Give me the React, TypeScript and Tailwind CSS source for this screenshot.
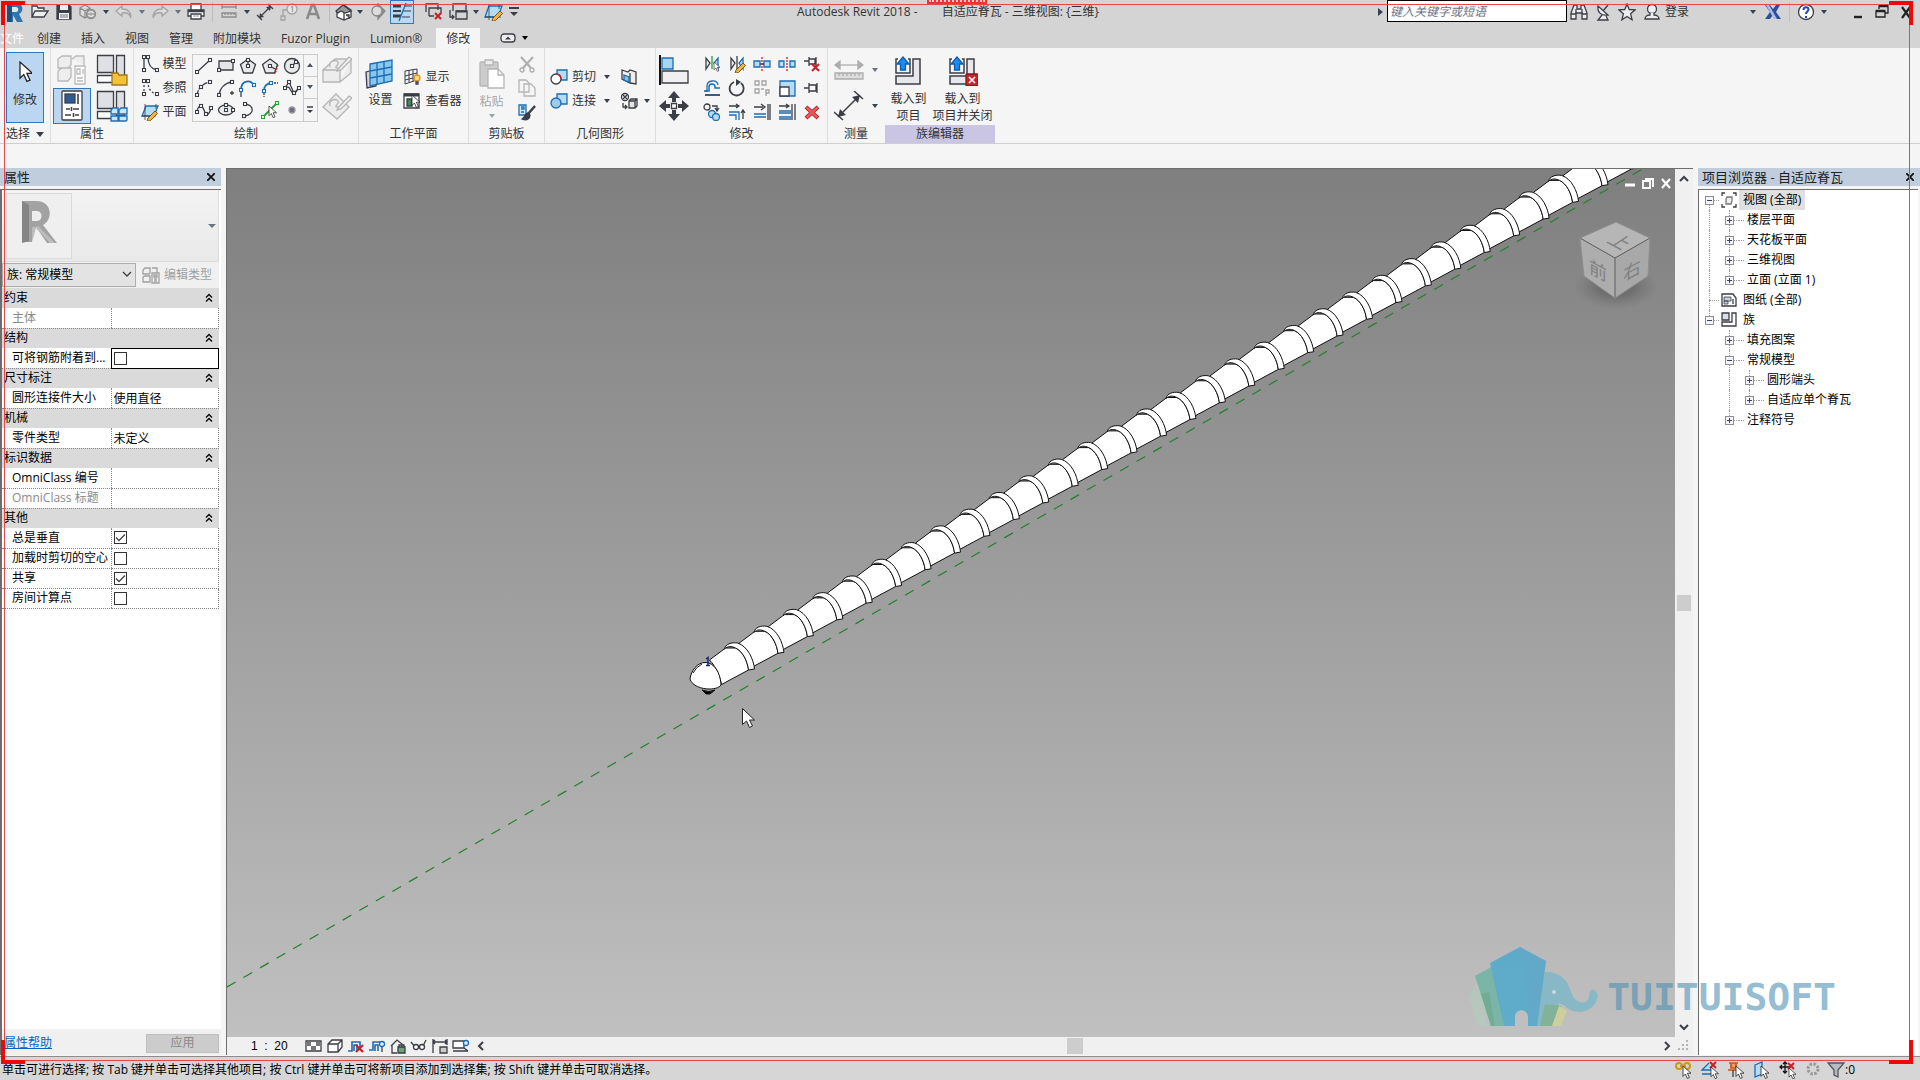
import React, { useState } from 'react';

const INK = '#3b3e46';
const BLUE = '#1c6db5';
const SKY = '#b5dcf3';
const GREY = '#a3a3a3';
const RED = '#c8202a';

type IconProps = { w?: number; h?: number; stroke?: string; children: React.ReactNode };

const Icon = ({ w = 18, h = 18, stroke = INK, children }: IconProps) => (
  <svg width={w} height={h} viewBox={`0 0 ${w} ${h}`} fill="none" stroke={stroke} strokeWidth={1.3} className="block shrink-0" aria-hidden="true">
    {children}
  </svg>
);

// Square handles drawn on the ends of sketch curves
const Nodes = ({ at, color = INK }: { at: [number, number][]; color?: string }) => (
  <>
    {at.map(([x, y]) => (
      <rect key={`${x}-${y}`} x={x - 1.5} y={y - 1.5} width={3} height={3} fill="#fff" stroke={color} strokeWidth={1.1} />
    ))}
  </>
);

const Pointer = ({ x = 0, y = 0, s = 1 }: { x?: number; y?: number; s?: number }) => (
  <path transform={`translate(${x} ${y}) scale(${s})`} d="M0 0v13l3-3 2.500 5.500 2.500-1-2.500-5.500h4.500z" fill="#fff" stroke="#222" strokeWidth={1} />
);

const Cross = ({ x, y, s = 5, w = 2 }: { x: number; y: number; s?: number; w?: number }) => (
  <path d={`M${x} ${y}l${s} ${s}M${x + s} ${y}l${-s} ${s}`} stroke={RED} strokeWidth={w} />
);

const Caret = ({ className = 'border-t-gray-700' }: { className?: string }) => (
  <span className={`inline-block border-x-[3px] border-t-4 border-x-transparent ${className}`} />
);

const Pencil = ({ x, y }: { x: number; y: number }) => (
  <path d={`M${x} ${y}l7-7 2.500 2.500-7 7-3.500 1z`} fill="#f0b440" stroke="#6b4a1a" strokeWidth={0.9} />
);

/* ---------- title bar ---------- */

const quick = {
  open: <Icon><path d="M1 14V3h5l1 2h6v2M1 14l3-6h13l-4 6z" fill="#eee" /></Icon>,
  save: <Icon><path d="M2 2h12l2 2v12H2z" fill={INK} /><path d="M5 2h8v5H5z" fill="#eee" stroke="none" /><path d="M4 10h10v6H4z" fill="#fff" stroke="none" /><path d="M5 12h8M5 14h8" strokeWidth={0.8} /></Icon>,
  sync: <Icon stroke="#8b8b8b"><path d="M1 5l5-3 5 3v7l-5 3-5-3zM1 5l5 3 5-3M6 8v7" fill="#ddd" /><circle cx="12" cy="11" r="4.500" fill="#aaa" /><path d="M9.500 10a3 3 0 0 1 5 0M14.500 12a3 3 0 0 1-5 0" stroke="#eee" /></Icon>,
  undo: <Icon stroke={GREY}><path d="M7 3L1 8l6 5v-3c5-1 8 1 9 5 0-6-3-9-9-9z" fill="#ddd" /></Icon>,
  redo: <Icon stroke={GREY}><path d="M11 3l6 5-6 5v-3c-5-1-8 1-9 5 0-6 3-9 9-9z" fill="#ddd" /></Icon>,
  print: <Icon><path d="M4 7V1h10v6" fill="#fff" /><path d="M1 7h16v6H1z" fill="#fff" /><path d="M1 8h16" strokeWidth={2.500} /><path d="M4 11h10v5H4z" fill="#fff" /><path d="M6 13h6" stroke="#aaa" /></Icon>,
  dims: <Icon stroke="#8d8d8d"><path d="M2 4h14M2 2v4M16 2v4M2 10h14v4H2zM5 10v2M8 10v2M11 10v2M14 10v2" /></Icon>,
  measure: <Icon><path d="M3 15L15 3M1 12l5 5M12 1l5 5" /><path d="M3 15l1-5 4 4zM15 3l-1 5-4-4z" fill={INK} stroke="none" /></Icon>,
  tag: <Icon stroke={GREY}><circle cx="12" cy="6" r="5" fill="#e5e5e5" /><path d="M7 7H3v7M1 13h4v4H1z" /><path d="M11 4.500l1.500-1V9" /></Icon>,
  text: <Icon stroke="#8a8a8a"><path d="M3 16L8 2h2l5 14M5 11h8" strokeWidth={2.600} /></Icon>,
  house: <Icon><path d="M2 8l7-6 7 5v7l-7 3-7-3z" fill="#fff" /><path d="M1 8l7-6 8 6-6 2-4-2-3 2z" fill="#999" /><path d="M9 10v7" /><path d="M11 12h3v4" fill="#888" /></Icon>,
  section: <Icon stroke="#888"><circle cx="8" cy="8" r="5" fill="#ddd" /><path d="M9 3a5 5 0 0 1 0 10zM9 1l7 7-7 8z" fill="#999" /><circle cx="8" cy="8" r="4" fill="#ddd" stroke="none" /></Icon>,
  thin: <Icon w={20}><path d="M1 3h8M1 13h8" strokeWidth={3} /><path d="M1 8h8" strokeWidth={2} /><path d="M12 3h8M11 8h8M10 14h8" strokeWidth={1} /><path d="M14 0L7 18" stroke={BLUE} /></Icon>,
  closeWin: <Icon><path d="M1 9V1h12v6M4 13V5h12v6M4 13h5" fill="none" /><Cross x={10} y={10} s={6} w={2.200} /></Icon>,
  switchWin: <Icon w={20}><path d="M5 8V1h13v7M8 16V8h11v8z" /><path d="M8 8.500h11" strokeWidth={2} /><path d="M2 7v7h3M4 12l2 2-2 2" /></Icon>,
  plane: <Icon w={20}><path d="M5 3h13l-4 11H1z" fill={SKY} stroke={BLUE} /><path d="M5 1v16M1 14h16M15 1v5" strokeWidth={0.8} /><Pencil x={9} y={15} /></Icon>,
  custom: <Icon w={12} h={12}><path d="M1 2h10" strokeWidth={2} /><path d="M2 6h8l-4 4z" fill={INK} stroke="none" /></Icon>,
};

const QuickButton = ({ name, children, className = 'w-6' }: { name: string; children: React.ReactNode; className?: string }) => (
  <button aria-label={name} className={`flex h-6 shrink-0 items-center justify-center ${className}`}>{children}</button>
);

const Divider = () => <span className="mx-1 h-5 w-px shrink-0 bg-[#bdbdbd]" />;

function TitleBar() {
  return (
    <header className="flex h-7 items-start bg-[#d4d4d4]">
      <div className="flex h-6 shrink-0 items-center">
        <QuickButton name="Revit" className="w-7">
          <Icon w={20} h={22} stroke="none">
            <path d="M3 2h9c8 0 8 9 3 11l4 8h-6l-4-7v7H3z" fill="#2f74ad" />
            <path d="M3 2l5 3v16H3z" fill="#1d4f80" />
            <path d="M8 6h4c3 0 3 5 0 5H8z" fill="#dce7ef" />
          </Icon>
        </QuickButton>
        <QuickButton name="打开">{quick.open}</QuickButton>
        <QuickButton name="保存">{quick.save}</QuickButton>
        <QuickButton name="同步">{quick.sync}</QuickButton>
        <QuickButton name="同步选项" className="w-3"><Caret /></QuickButton>
        <QuickButton name="放弃">{quick.undo}</QuickButton>
        <QuickButton name="放弃列表" className="w-3"><Caret className="border-t-gray-500" /></QuickButton>
        <QuickButton name="重做">{quick.redo}</QuickButton>
        <QuickButton name="重做列表" className="w-3"><Caret className="border-t-gray-500" /></QuickButton>
        <QuickButton name="打印" className="w-6">{quick.print}</QuickButton>
        <Divider />
        <QuickButton name="测量" className="w-6">{quick.dims}</QuickButton>
        <QuickButton name="测量选项" className="w-3"><Caret /></QuickButton>
        <QuickButton name="对齐尺寸标注">{quick.measure}</QuickButton>
        <QuickButton name="按类别标记">{quick.tag}</QuickButton>
        <QuickButton name="文字">{quick.text}</QuickButton>
        <Divider />
        <QuickButton name="默认三维视图" className="w-5">{quick.house}</QuickButton>
        <QuickButton name="三维选项" className="w-3"><Caret /></QuickButton>
        <QuickButton name="剖面">{quick.section}</QuickButton>
        <QuickButton name="细线" className="w-6 border border-[#2f78bd] bg-[#b9d8f2]">{quick.thin}</QuickButton>
        <QuickButton name="关闭隐藏窗口" className="ml-2 w-6">{quick.closeWin}</QuickButton>
        <QuickButton name="切换窗口">{quick.switchWin}</QuickButton>
        <QuickButton name="窗口列表" className="w-3"><Caret /></QuickButton>
        <QuickButton name="工作平面">{quick.plane}</QuickButton>
        <QuickButton name="自定义" className="w-4">{quick.custom}</QuickButton>
      </div>

      <div className="flex h-6 flex-1 items-center justify-center gap-6 whitespace-nowrap pr-1 text-[#333]">
        <span>Autodesk Revit 2018 -</span>
        <span>自适应脊瓦 - 三维视图: {'{三维}'}</span>
      </div>

      <div className="flex h-6 shrink-0 items-center pr-0.5">
        <span className="mr-1 border-y-4 border-l-[5px] border-y-transparent border-l-gray-700" />
        <input aria-label="搜索" placeholder="键入关键字或短语" className="h-[22px] w-[180px] self-start border border-black bg-white px-0.5 italic text-gray-800 placeholder:text-gray-500 outline-none" />
        <QuickButton name="搜索">
          <Icon><path d="M4 2h3v4h4V2h3l3 8v6h-5v-6H6v6H1v-6z" fill="#eee" /><path d="M1 11h5M12 11h5M6 6v4M12 6v4" /></Icon>
        </QuickButton>
        <QuickButton name="通讯中心">
          <Icon><path d="M4 3c-1 6 3 10 10 9zM9 8l5-6M8 12l-4 5h10l-2-4" fill="#eee" /></Icon>
        </QuickButton>
        <QuickButton name="收藏夹">
          <Icon><path d="M9 1l2.200 5.500 6 .3-4.600 4 1.500 6L9 13.500l-5.100 3.300 1.500-6-4.600-4 6-.3z" fill="#eee" /></Icon>
        </QuickButton>
        <button className="flex h-6 w-[98px] items-center gap-1 pl-1 text-[#333]">
          <Icon><circle cx="9" cy="6" r="4.500" fill="#eee" /><path d="M7 10v2c-3 0-5 2-5 4h14c0-2-2-4-5-4v-2" fill="#eee" /></Icon>
          登录
        </button>
        <QuickButton name="登录选项" className="ml-2 w-4"><Caret /></QuickButton>
        <QuickButton name="Exchange">
          <Icon stroke="none"><path d="M1 2h5l3 4 3-4h4l-4 7 5 7h-5l-3-4-3 4H1l5-7z" fill="#2f4f9c" /><path d="M2 2h3l8 14h-3z" fill="#a9bde6" /></Icon>
        </QuickButton>
        <Divider />
        <QuickButton name="帮助">
          <Icon><circle cx="9" cy="9" r="7.500" fill="#fff" /><path d="M6.500 7c0-4 5-3.500 5-.5 0 2-2.500 2-2.500 4.500M9 13v2" stroke="#2147b5" strokeWidth={2} /></Icon>
        </QuickButton>
        <QuickButton name="帮助选项" className="mr-4 w-3"><Caret /></QuickButton>
        <QuickButton name="最小化"><Icon><path d="M5 14h8" stroke="#222" strokeWidth={2.400} /></Icon></QuickButton>
        <QuickButton name="还原"><Icon stroke="#222"><path d="M6 6V3h9v7h-3M3 8h9v6H3z" /><path d="M3 8h9M6 3h9" strokeWidth={2.500} /></Icon></QuickButton>
        <QuickButton name="关闭"><Icon stroke="#222"><path d="M5 4l8 11M13 4L5 15" strokeWidth={2.200} /></Icon></QuickButton>
      </div>
    </header>
  );
}

const tabs = ['创建', '插入', '视图', '管理', '附加模块', 'Fuzor Plugin', 'Lumion®', '修改'];

function TabStrip() {
  const [active, setActive] = useState('修改');
  return (
    <nav className="flex h-5 items-stretch bg-[#d4d4d4] text-[#333]">
      <button className="w-[27px] pt-0.5 text-left text-white">文件</button>
      {tabs.map(tab => (
        <button key={tab} onClick={() => setActive(tab)} className={`whitespace-nowrap px-2.5 pt-0.5 ${tab === active ? 'ml-1 bg-[#f5f5f5]' : ''}`}>
          {tab}
        </button>
      ))}
      <button aria-label="最小化功能区" className="ml-5 flex items-center gap-1.5">
        <Icon w={16} h={10}><rect x="1" y="1" width="14" height="8" rx="3" fill="#eee" /><path d="M5 6.500l3-3 3 3z" fill={INK} stroke="none" /></Icon>
        <Caret className="border-t-black" />
      </button>
    </nav>
  );
}

/* ---------- ribbon ---------- */

const Tool = ({ name, children, className = '' }: { name: string; children: React.ReactNode; className?: string }) => (
  <button aria-label={name} className={`flex items-center justify-center ${className}`}>{children}</button>
);

const Panel = ({ title, children, className = '', label = '' }: { title: React.ReactNode; children: React.ReactNode; className?: string; label?: string }) => (
  <section className={`flex shrink-0 flex-col border-r border-[#dedede] ${className}`}>
    <div className="flex h-[77px] items-center justify-center pt-0.5">{children}</div>
    <h2 className={`flex h-[18px] items-center justify-center ${label}`}>{title}</h2>
  </section>
);

const FamilyBlocks = () => (
  <g>
    <path d="M1.500 1.500h16v17h-16zM20.500 1.500h8v24h-8z" fill="#dfe0e6" />
    <path d="M1.500 21.500h19v7h-19z" fill="#fff" />
  </g>
);

const draws: [string, React.ReactNode][] = [
  ['直线', <><path d="M2 15L15 3" /><Nodes at={[[2, 15], [15, 3]]} /></>],
  ['矩形', <><path d="M2 4h14v9H2z" fill="#e5e5e5" /><Nodes at={[[2, 13], [16, 4]]} /></>],
  ['内接多边形', <><path d="M9 2l7.500 5.500-3 8.500h-9l-3-8.500z" fill="#e8e8e8" /><path d="M9 9V3" /><Nodes at={[[9, 9], [9, 3]]} /></>],
  ['外接多边形', <><path d="M9 2l7.500 5.500-3 8.500h-9l-3-8.500z" fill="#e8e8e8" /><path d="M9 9l5 3" /><path d="M17 8l-3 9" stroke={RED} strokeDasharray="2 1" /><Nodes at={[[9, 9]]} /></>],
  ['圆形', <><circle cx="9" cy="9" r="7.500" fill="#e8e8e8" /><path d="M9 9l4-4" /><Nodes at={[[9, 9], [13, 5]]} /></>],
  ['起点-终点-半径弧', <><path d="M2 16C3 9 8 4 15 3" strokeDasharray="5 1" /><Nodes at={[[2, 16], [6, 8], [15, 3]]} /></>],
  ['圆心-端点弧', <><path d="M2 16C3 9 8 4 15 3M13 14h4M15 12v4" /><Nodes at={[[2, 16], [15, 3]]} /></>],
  ['相切-端点弧', <><path d="M2 11C2 1 12 0 15 7" stroke={BLUE} strokeWidth={1.800} /><path d="M2 13v5" /><Nodes at={[[2, 11], [15, 6]]} color={BLUE} /></>],
  ['圆角弧', <><path d="M3 12c0-6 3-8 9-8" stroke={BLUE} strokeWidth={1.800} /><path d="M3 14v4M13 4h4" strokeDasharray="2 1" /><Nodes at={[[3, 12], [10, 4]]} color={BLUE} /></>],
  ['样条曲线', <><path d="M2 9L6 3l5 11 5-5M2 9c6-4 5 6 9 5s3-5 5-5" /><Nodes at={[[2, 9], [6, 3], [11, 14], [16, 9]]} /></>],
  ['点样条曲线', <><path d="M2 11c1-7 5-8 7-2s5 6 7-2" /><Nodes at={[[2, 11], [6, 5], [11, 13], [16, 7]]} /></>],
  ['椭圆', <><ellipse cx="9" cy="9" rx="7.500" ry="5" fill="#eee" /><Nodes at={[[9, 9], [9, 4], [16, 9]]} /></>],
  ['半椭圆', <><path d="M5 3c11 0 11 11 0 12" /><Nodes at={[[6, 3], [5, 15]]} /></>],
  ['拾取线', <><path d="M1 17L16 2" stroke="#2e9e34" strokeWidth={1.800} /><Nodes at={[[2, 16], [16, 2]]} color="#2e9e34" /><Pointer x={8} y={5} s={0.750} /></>],
  ['点图元', <circle cx="9" cy="9" r="3" fill="#6d6d86" stroke="#999" />],
];

const edits: [string, React.ReactNode][] = [
  ['镜像-拾取轴', <><path d="M3 3v11l4-6z" fill="#eee" /><path d="M15 3v11l-4-6z" fill={SKY} stroke={BLUE} /><path d="M9 1v13" stroke="#2e9e34" /><Pointer x={11} y={7} s={0.600} /></>],
  ['镜像-绘制轴', <><path d="M3 3v11l4-6z" fill="#eee" /><path d="M15 3v11l-4-6z" fill={SKY} stroke={BLUE} /><path d="M9 1v13" /><Pencil x={8} y={15} /></>],
  ['拆分图元', <><path d="M1 6h6v6H1zM11 6h6v6h-6z" fill={SKY} stroke={BLUE} /><path d="M7 9h4" /><path d="M9 2v14" stroke={RED} strokeDasharray="2 1" /></>],
  ['用间隙拆分', <><path d="M1 6h5v6H1zM12 6h5v6h-5z" fill={SKY} stroke={BLUE} /><path d="M9 2v14" stroke={RED} strokeDasharray="2 1" /></>],
  ['解锁', <><path d="M1 6h5M6 2v9M6 4h6v5H6M13 2v9" /><Cross x={9} y={9} s={7} /></>],
  ['偏移', <><path d="M2 12h4V8c0-4 6-4 6 0v1h5" stroke={BLUE} strokeWidth={1.500} /><path d="M2 16h15M1 12h3V7c0-6 10-7 11-1" stroke={BLUE} /><path d="M2 16h15" /></>],
  ['旋转', <><path d="M6 3a7 7 0 1 0 7 1" strokeWidth={1.800} /><path d="M8 0v7l5-4z" fill={INK} stroke="none" /></>],
  ['阵列', <g stroke={GREY}><path d="M2 2h4v4H2zM9 2h4v4H9zM2 10h4v4H2zM8 10h3M13 17v-6h3v3h-3" /></g>],
  ['缩放', <><path d="M2 2h15v15H2z" fill={SKY} stroke={BLUE} /><path d="M2 8h9v9H2z" fill="#fff" /></>],
  ['锁定', <path d="M1 9h5M6 4v10M6 6h7v6H6M14 4v10" />],
  ['复制', <><circle cx="4" cy="4" r="3" /><path d="M9 3h5v4M12 5l2 3 2-3" /><circle cx="9" cy="11" r="3.500" fill={SKY} stroke={BLUE} /><circle cx="13" cy="14" r="3.500" fill={SKY} stroke={BLUE} /></>],
  ['修剪/延伸为角', <><path d="M1 3h9M8 1l3 2-3 2M15 16V8M13 10l2-3 2 3" /><path d="M1 9h10v8M1 12h7v5" stroke={BLUE} /></>],
  ['修剪/延伸单个图元', <><path d="M1 4h9M8 1l4 3-4 3M15 1v16M17 1v16" /><path d="M1 11h12M1 14h12" stroke={BLUE} /></>],
  ['修剪/延伸多个图元', <><path d="M1 3h9M8 1l3 2-3 2M14 1v16M17 1v16" /><path d="M1 8h12M1 10h12M1 14h12M1 16h12" stroke={BLUE} /></>],
  ['删除', <><path d="M3 4l12 11M15 4L3 15" stroke="#a81c22" strokeWidth={4} /><path d="M3.500 4.500l11 10M14.500 4.500l-11 10" stroke="#f0585c" strokeWidth={2.400} /></>],
];

const LoadIcon = ({ close = false }: { close?: boolean }) => (
  <Icon w={30} h={30}>
    <path d="M19 3h7v25H2v-8h17z" fill="#e8e8ec" strokeWidth={1.500} />
    <path d="M4 3H2v14h14V3h-2" strokeWidth={1.500} />
    <path d="M9 1L3 8h3.500v6h5V8H15z" fill="#1f8af0" stroke="#0d5cb0" />
    {close && <><rect x="18" y="18" width="12" height="12" rx="1" fill="#c7262c" stroke="#8c1318" /><path d="M21 21l6 6M27 21l-6 6" stroke="#fff" strokeWidth={1.600} /></>}
  </Icon>
);

function Ribbon() {
  return (
    <div className="flex h-24 border-b border-[#cfcfcf] bg-[#f5f5f5] text-[#333]">
      <Panel title={<button className="flex items-center gap-1.5">选择 <span className="border-x-4 border-t-[5px] border-x-transparent border-t-gray-700" /></button>} className="w-[51px]">
        <button className="flex h-[71px] w-[38px] flex-col items-center justify-between border border-[#2f78bd] bg-[#bad6f0] pb-3.5 pt-2">
          <Icon w={14} h={22}><Pointer x={2} y={1} s={1.250} /></Icon>
          <span>修改</span>
        </button>
      </Panel>

      <Panel title="属性" className="w-[83px]">
        <div className="grid grid-cols-2 gap-x-0.5">
          <Tool name="族类型" className="h-9 w-[38px]">
            <Icon w={30} h={32} stroke="#b9b9b9">
              <path d="M1 5l4-3h9v9l-3 3H1zM15 5l4-3h8v9M1 17l4-3h9v9l-3 4H1z" fill="#eee" />
              <path d="M18 12h10v18H18z" fill="#fff" /><path d="M20 15h3v5h-3zM26 15v5M20 24h6M20 27h6" />
            </Icon>
          </Tool>
          <Tool name="族类别" className="h-9 w-[38px]">
            <Icon w={32} h={32}><FamilyBlocks /><path d="M16 19h6l1 2h8v10H16z" fill="#f4c13a" stroke="#a3771a" /></Icon>
          </Tool>
          <Tool name="属性" className="h-9 w-[38px] border border-[#2f78bd] bg-[#bad6f0]">
            <Icon w={30} h={31}>
              <rect x="5" y="1" width="20" height="29" rx="1" fill="#fff" />
              <rect x="8" y="4" width="10" height="9" fill="#2b5d94" />
              <path d="M21 4v10" strokeWidth={1.600} />
              <path d="M9 19h4M16 19h6M8 25h6M18 25h4M14.500 17v4M16.500 23v4" strokeWidth={1.500} />
            </Icon>
          </Tool>
          <Tool name="类型属性" className="h-9 w-[38px]">
            <Icon w={32} h={32}><FamilyBlocks /><path d="M15 20l2-2h5v6h-7zM23 20l2-2h6v6h-8zM15 26h7v5h-7zM23 26h8v4l-1 1h-7z" fill="#c9e6f8" stroke={BLUE} /></Icon>
          </Tool>
        </div>
      </Panel>

      <Panel title="绘制" className="w-[225px]">
        <div className="flex w-[51px] flex-col">
          <button className="flex h-6 items-center gap-1">
            <Icon><path d="M3 2v13M7 2c0 8 3 12 9 13" /><Nodes at={[[3, 2], [3, 15], [7, 2], [16, 15]]} /></Icon>模型
          </button>
          <button className="flex h-6 items-center gap-1">
            <Icon><path d="M3 2v13M7 2c0 8 3 12 9 13" strokeDasharray="2 2" /><Nodes at={[[3, 2], [3, 15], [7, 2], [16, 15]]} /></Icon>参照
          </button>
          <button className="flex h-6 items-center gap-1">
            <Icon><path d="M5 3h12l-4 10H1z" fill={SKY} stroke={BLUE} /><path d="M4 1v16M1 13h14M15 1v5" strokeWidth={0.800} /><Pencil x={7} y={15} /></Icon>平面
          </button>
        </div>
        <div className="flex h-[68px] border border-[#cbcbcb]">
          <div className="grid grid-cols-5">
            {draws.map(([name, art]) => (
              <Tool key={name} name={name} className="h-[22px] w-[22px]"><Icon>{art}</Icon></Tool>
            ))}
          </div>
          <div className="flex w-3.5 flex-col divide-y divide-[#cbcbcb] border-l border-[#cbcbcb]">
            <Tool name="上一行" className="flex-1"><span className="border-x-[3px] border-b-4 border-x-transparent border-b-gray-600" /></Tool>
            <Tool name="下一行" className="flex-1"><Caret className="border-t-gray-600" /></Tool>
            <Tool name="更多" className="flex-1"><Icon w={8} h={8}><path d="M1 1h6" strokeWidth={1.500} /><path d="M1 4h6l-3 3z" fill={INK} stroke="none" /></Icon></Tool>
          </div>
        </div>
        <div className="ml-1 flex flex-col gap-1">
          <Tool name="在面上绘制" className="h-8">
            <Icon w={30} h={30} stroke="#b5b5b5"><path d="M1 15L13 4h16L18 15zM1 15v12h17V15M18 27l11-9V4" fill="#ececec" /><path d="M8 12c-2-6 6-8 8-5s-6 6 0 6M16 14L27 2l3 2-11 11-4 1z" fill="#eee" /></Icon>
          </Tool>
          <Tool name="在工作平面上绘制" className="h-8">
            <Icon w={30} h={30} stroke="#b5b5b5"><path d="M1 16L14 3l13 13-12 12z" fill="#ececec" /><path d="M8 15c-2-6 6-8 8-5s-6 6 0 6M16 17L27 5l3 2-11 11-4 1z" fill="#eee" /></Icon>
          </Tool>
        </div>
      </Panel>

      <Panel title="工作平面" className="w-[110px]">
        <button className="mr-2 flex flex-col items-center gap-0.5 pb-2.5">
          <Icon w={30} h={32}>
            <path d="M1 14l10-3v17l-9 2z" fill="#d6d6dc" />
            <path d="M5 6l22-4v21L5 28z" fill="#8ac7ee" stroke={BLUE} />
            <path d="M12 5v21M19 4v21M5 13l22-4M5 20l22-4" stroke={BLUE} />
          </Icon>
          设置
        </button>
        <div className="flex flex-col pt-0.5">
          <button className="flex h-6 items-center gap-1">
            <Icon><path d="M2 3l12-2v11L2 16zM6 2v12M10 2v11M2 8l12-3M2 12l12-3" strokeWidth={1} /><circle cx="14" cy="10" r="3" fill="#ffd877" stroke="#e09420" /><path d="M13 14h2v2h-2z" /></Icon>显示
          </button>
          <button className="flex h-6 items-center gap-1">
            <Icon><path d="M1 2h15v14H1z" fill="#fff" /><path d="M1 3h15" strokeWidth={3} /><path d="M4 7h5v7H4z" fill="#3a8b52" /><Pointer x={9} y={3} s={0.800} /></Icon>查看器
          </button>
        </div>
      </Panel>

      <Panel title="剪贴板" className="w-[76px]">
        <button className="mr-3 flex flex-col items-center text-[#a5a5a5]">
          <Icon w={28} h={32} stroke="#b5b5b5"><rect x="2" y="4" width="18" height="24" rx="1" fill="#ccc" /><path d="M7 2h8v5H7z" fill="#eee" /><path d="M10 11h10l6 6v13H10z" fill="#fff" /><path d="M20 11v6h6" /></Icon>
          <span className="pt-1">粘贴</span>
          <Caret className="mt-1 border-t-gray-400" />
        </button>
        <div className="flex flex-col">
          <Tool name="剪切到剪贴板" className="h-6"><Icon stroke="#adadad"><path d="M3 2l10 11M15 2L5 13" strokeWidth={2} /><circle cx="4" cy="15" r="2" /><circle cx="14" cy="15" r="2" /></Icon></Tool>
          <Tool name="复制到剪贴板" className="h-6"><Icon stroke="#b5b5b5"><path d="M1 1h7l3 3v9H1zM6 5h7l4 4v8H6z" fill="#f5f5f5" /></Icon></Tool>
          <Tool name="匹配类型属性" className="h-6"><Icon><path d="M1 2h7v10H1z" fill="#d8eaf8" stroke={BLUE} /><path d="M3 4h3v2H3M3 9h3" stroke={BLUE} /><path d="M17 3l-7 8" strokeWidth={2.500} /><path d="M10 10c-3 0-3 4-6 6 5 2 8 0 8-4z" fill={INK} /></Icon></Tool>
        </div>
      </Panel>

      <Panel title="几何图形" className="w-[111px]">
        <div className="flex flex-col pt-0.5">
          <button className="flex h-6 items-center gap-1">
            <Icon><path d="M7 2h10v10H7z" fill={SKY} stroke={BLUE} /><circle cx="6" cy="11" r="5" fill="#fff" /><path d="M7 6a5 5 0 0 1 4 5" stroke={RED} /></Icon>剪切 <Caret className="ml-1 border-t-gray-700" />
          </button>
          <button className="flex h-6 items-center gap-1">
            <Icon stroke={BLUE}><path d="M7 2h10v10H7z" fill={SKY} /><circle cx="6" cy="11" r="5" fill="#9ccdec" /></Icon>连接 <Caret className="ml-1 border-t-gray-700" />
          </button>
        </div>
        <div className="ml-2.5 mr-2 flex flex-col pt-0.5">
          <Tool name="拆分面" className="h-6 w-[18px]"><Icon><path d="M2 2l6 2 2-2 6 2v12l-6-1-8-4z" fill="#eee" /><path d="M10 5v10" /><path d="M4 7l5 2v5l-5-2z" fill="#8bbfe8" stroke={BLUE} /></Icon></Tool>
          <button aria-label="连接端切割" className="-mr-2 flex h-6 items-center gap-1.5">
            <Icon><circle cx="5" cy="5" r="3.500" /><path d="M3 3l4 4M7 3L3 7M3 11v4h3M5 13l2 2-2 2" /><path d="M9 9l2-2h6v7l-2 2H9zM9 9h6v7M15 9l2-2" fill="#e5e5e5" /></Icon><Caret />
          </button>
        </div>
      </Panel>

      <Panel title="修改" className="w-[172px]">
        <div className="mr-2.5 flex flex-col gap-1">
          <Tool name="对齐" className="h-8"><Icon w={30} h={30}><path d="M1 0v30" stroke="#111" strokeWidth={2} /><path d="M3 3h11v11H3z" fill="#a9d4f2" stroke={BLUE} /><path d="M3 16h26v12H3z" fill="#f0f0f2" /></Icon></Tool>
          <Tool name="移动" className="h-8"><Icon w={30} h={30} stroke="none"><path d="M15 0l6 7h-4v4h-4V7H9zM15 30l6-7h-4v-4h-4v4H9zM0 15l7-6v4h4v4H7v4zM30 15l-7-6v4h-4v4h4v4z" fill={INK} /><path d="M12.500 12.500h5v5h-5z" fill="#fff" stroke={INK} /></Icon></Tool>
        </div>
        <div className="grid grid-cols-5">
          {edits.map(([name, art]) => (
            <Tool key={name} name={name} className="h-6 w-[25px]"><Icon>{art}</Icon></Tool>
          ))}
        </div>
      </Panel>

      <Panel title="测量" className="w-[57px] border-r-transparent">
        <div className="flex flex-col gap-1">
          <button aria-label="测量距离" className="flex h-8 items-center gap-2">
            <Icon w={30} h={22} stroke="#adadad"><path d="M1 6h28" /><path d="M1 6l5-4v8zM29 6l-5-4v8z" fill="#adadad" /><path d="M1 14h28v6H1zM5 14v3M9 14v3M13 14v3M17 14v3M21 14v3M25 14v3" fill="#ddd" /></Icon>
            <Caret className="border-t-gray-500" />
          </button>
          <button aria-label="尺寸标注" className="flex h-8 items-center gap-2">
            <Icon w={30} h={30}><path d="M4 26L26 4M0 21l9 8M20 0l9 8" strokeWidth={1.500} /><path d="M4 26l2-8 6 6zM26 4l-2 8-6-6z" fill={INK} stroke="none" /></Icon>
            <Caret />
          </button>
        </div>
      </Panel>

      <Panel title="族编辑器" className="w-[110px] border-r-0" label="bg-[#c9c5e3]">
        <div className="flex items-start gap-px pt-1">
          <button className="flex w-11 flex-col items-center gap-1 leading-[17px]"><LoadIcon /><span>载入到<br />项目</span></button>
          <button className="flex w-[62px] flex-col items-center gap-1 leading-[17px]"><LoadIcon close /><span>载入到<br />项目并关闭</span></button>
        </div>
      </Panel>
    </div>
  );
}

/* ---------- properties palette ---------- */

type Prop = { label: string; text?: string; checked?: boolean; muted?: boolean; focused?: boolean };

const groups: { title: string; rows: Prop[] }[] = [
  { title: '约束', rows: [{ label: '主体', muted: true }] },
  { title: '结构', rows: [{ label: '可将钢筋附着到...', checked: false, focused: true }] },
  { title: '尺寸标注', rows: [{ label: '圆形连接件大小', text: '使用直径' }] },
  { title: '机械', rows: [{ label: '零件类型', text: '未定义' }] },
  { title: '标识数据', rows: [{ label: 'OmniClass 编号' }, { label: 'OmniClass 标题', muted: true }] },
  {
    title: '其他',
    rows: [
      { label: '总是垂直', checked: true },
      { label: '加载时剪切的空心', checked: false },
      { label: '共享', checked: true },
      { label: '房间计算点', checked: false },
    ],
  },
];

const PaletteTitle = ({ children }: { children: React.ReactNode }) => (
  <div className="flex h-[18px] shrink-0 items-center justify-between bg-[#bfcddd] pl-1 pr-1.5 text-[13px] leading-[18px] text-[#222]">
    <h2>{children}</h2>
    <button aria-label="关闭面板"><Icon w={8} h={8} stroke="#111"><path d="M0 0l8 8M8 0L0 8" strokeWidth={1.800} /></Icon></button>
  </div>
);

function Properties() {
  return (
    <aside className="flex w-[221px] shrink-0 flex-col gap-[3px]">
      <PaletteTitle>属性</PaletteTitle>
      <div className="flex flex-1 flex-col border-l-2 border-t border-[#6e6e6e] bg-white">
        <div className="mr-0.5 flex flex-col bg-[#f0f0f0]">
          <button aria-label="类型选择器" className="flex h-[72px] items-center justify-between border-b border-r border-[#dcdcdc] bg-linear-to-b from-[#f3f3f3] to-[#e9e9e9] pl-1 pr-0.5">
            <span className="flex h-[66px] w-[66px] justify-center border border-[#dadada] bg-[#efefef] pt-1.5">
              <svg width="40" height="46" viewBox="0 0 40 46" aria-hidden="true">
                <path d="M3 1h14c17 0 17 19 7 24l14 18h-10L17 27l-4 1v14H3z" fill="#a2a2a2" />
                <path d="M3 1l7 4v36l-7 2z" fill="#858585" />
                <path d="M13 11h5c6 0 6 10 0 10h-5z" fill="#ededed" />
                <path d="M13 28l6-2 17 17h-5L17 28l-4 14z" fill="#bcbcbc" />
              </svg>
            </span>
            <span className="border-x-4 border-t-4 border-x-transparent border-t-gray-500" />
          </button>
          <div className="flex h-[26px] items-center">
            <div className="relative w-[134px]">
              <select aria-label="族" className="h-6 w-full appearance-none border border-[#adadad] bg-[#e3e3e3] pl-1 text-black">
                <option>族: 常规模型</option>
              </select>
              <span className="pointer-events-none absolute right-1 top-2"><Icon w={10} h={8}><path d="M1 1l4 4 4-4" /></Icon></span>
            </div>
            <button className="ml-1.5 flex items-center gap-1 text-[#a0a0a0]" disabled>
              <Icon stroke="#a0a0a0"><path d="M1 4l2-2h5v5l-1 1H1zM10 2h5v5M1 11l2-1h5v6H1z" /><path d="M10 7h7v10h-7zM12 9h3v2h-3zM12 13h3M12 15h3" /></Icon>
              编辑类型
            </button>
          </div>
        </div>
        <table className="mr-0.5 table-fixed border-collapse text-black">
          <colgroup><col className="w-[109px]" /><col /></colgroup>
          {groups.map(group => (
            <tbody key={group.title}>
              <tr className="h-5 bg-[#dadada]">
                <th colSpan={2} className="p-0 pl-0.5 pr-1.5 text-left font-normal">
                  <span className="flex items-center justify-between">
                    {group.title}
                    <button aria-label="折叠"><Icon w={8} h={10} stroke="#111"><path d="M1 4.500L4 1.500l3 3M1 8.500l3-3 3 3" strokeWidth={1.500} /></Icon></button>
                  </span>
                </th>
              </tr>
              {group.rows.map(row => (
                <tr key={row.label} className="h-5">
                  <td className={`whitespace-nowrap border-b border-dotted border-[#888] p-0 pl-2.5 ${row.muted ? 'text-[#8a8a8a]' : ''}`}>
                    <label htmlFor={row.label}>{row.label}</label>
                  </td>
                  <td className={`p-0 ${row.focused ? 'border border-black' : 'border-b border-x border-dotted border-[#888]'}`}>
                    {row.checked === undefined ? (
                      <input id={row.label} defaultValue={row.text} className="block h-[19px] w-full px-0.5 outline-none" />
                    ) : (
                      <span className="relative ml-0.5 flex items-center">
                        <input id={row.label} type="checkbox" defaultChecked={row.checked} className="peer size-[13px] appearance-none border border-[#333] bg-white" />
                        <span className="pointer-events-none absolute left-px hidden peer-checked:block"><Icon w={11} h={11} stroke="#444"><path d="M1 5.500l3 3 6-6" /></Icon></span>
                      </span>
                    )}
                  </td>
                </tr>
              ))}
            </tbody>
          ))}
        </table>
        <div className="mt-auto flex h-[26px] items-center justify-between bg-[#f0f0f0] px-0.5 pt-0.5">
          <a href="#help" className="text-[#0a63c0] underline">属性帮助</a>
          <button disabled className="h-[19px] w-[73px] border border-[#bfbfbf] bg-[#cccccc] text-[#888]">应用</button>
        </div>
      </div>
    </aside>
  );
}

/* ---------- 3D view ---------- */

const tiles = Array.from({ length: 32 }, (_, i) => 31 - i);

function Model() {
  return (
    <svg className="absolute inset-0 size-full" aria-hidden="true">
      <defs>
        <radialGradient id="cube-shadow">
          <stop offset="0.400" stopColor="#555" stopOpacity="0.500" />
          <stop offset="1" stopColor="#666" stopOpacity="0" />
        </radialGradient>
      </defs>
      <line x1="0" y1="818" x2="1426" y2="-6" stroke="#23802b" strokeWidth="1.200" strokeDasharray="10 9.100" />
      <g fill="#fff" stroke="#111" strokeLinejoin="round">
        {tiles.map(n => (
          <g key={n} transform={`translate(${524.5 + n * 29.43} ${501 - n * 16.7})`}>
            <path d="M-42-10L-26-22L-16-22C-9-19-4-9-3 0L-30 14.500C-32 5-36-4-42-10z" />
            <path d="M-27-21C-26-26-20-28-14-27C-4-24 2-11 3-1L-3 0C-4-9-9-19-16-22C-20-24-24-24-27-21z" />
          </g>
        ))}
        <path d="M475 521q7 3 13 0l-5 4h-4z" fill="#000" />
        <path d="M494 515C493 503 487 494 479 493.500C470 493 464 502 463 510C465 517 475 520 482 520C489 520 494 518 494 515z" />
        <path d="M466 504q3-6 9-9" fill="none" />
      </g>
      <path d="M479 490l2-1.500v8M479 496.500h4" stroke="#17276f" strokeWidth="1.500" fill="none" />
      <path transform="translate(515.500 539.500)" d="M0 0v16l4-3.500 3 6.500 3-1.500-3-6h5z" fill="#fff" stroke="#222" />

      <g transform="translate(-1 0)">
        <ellipse cx="1390" cy="118" rx="42" ry="22" fill="url(#cube-shadow)" />
        <path d="M1354 69l36-16 34 16-35 20z" fill="#b6b6b6" />
        <path d="M1354 69l35 20v40l-31-22z" fill="#adadad" />
        <path d="M1424 69l-35 20v40l33-22z" fill="#a8a8a8" />
        <path d="M1354 69l35 20 35-20M1389 89v40" fill="none" stroke="#5e5e5e" />
        <path d="M1354 69l36-16 34 16-2 38-33 22-31-22z" fill="none" stroke="#8e8e8e" />
        <g fontSize="18" fill="#808080" textAnchor="middle">
          <text transform="translate(1372 108) skewY(28)">前</text>
          <text transform="translate(1406 108) skewY(-28)">右</text>
          <text transform="translate(1388 77) rotate(28) skewX(-28)">上</text>
        </g>
      </g>
    </svg>
  );
}

const viewTools: [string, React.ReactNode][] = [
  ['详细程度', <><path d="M1 4h15v10H1z" fill="#fff" /><path d="M2 5h4v4H2zM11 5h4v4h-4zM6 9h5v4H6z" fill="#777" stroke="none" /></>],
  ['视觉样式', <path d="M2 7l4-4h10v7l-4 5H2zM2 7h10v8M12 7l4-4" fill="#fff" />],
  ['关闭阴影', <><path d="M1 14h4V5h8v8M7 14V8h3v6" stroke={BLUE} strokeWidth={1.600} /><Cross x={9} y={8} s={7} w={2.200} /></>],
  ['裁剪视图', <><path d="M1 13h4V5h7M7 14V8h3v6" stroke={BLUE} strokeWidth={1.600} /><circle cx="14" cy="7" r="2.500" fill="#dff0ff" stroke={BLUE} /><path d="M14 10v5" /></>],
  ['锁定三维视图', <><path d="M2 9l6-6 5 4v3M3 8v8h5" /><path d="M9 10h7v6H9z" fill="#69a57c" /><path d="M10 10V8h5v2" /></>],
  ['临时隐藏', <><path d="M1 5l4 5M16 3l-3 6" /><circle cx="6" cy="10" r="2.500" fill="#fff" /><circle cx="12" cy="10" r="2.500" fill="#fff" /></>],
  ['临时视图属性', <><path d="M2 2v14M16 2v6M2 5h14M4 3L2 5l2 2M14 3l2 2-2 2" /><path d="M9 10h7v6H9z" fill="#ccc" /></>],
  ['显示约束', <><path d="M1 4h11v7H1z" fill="#fff" /><path d="M1 14h15M12 11l4 3" /><circle cx="14" cy="6" r="2.500" fill="#dff0ff" stroke={BLUE} /></>],
];

function Viewport() {
  return (
    <main className="flex min-w-0 flex-1 flex-col border-l border-t border-[#6e6e6e] bg-[#f0f0f0]">
      <div className="flex min-h-0 flex-1">
        <div className="relative min-w-0 flex-1 overflow-hidden bg-linear-to-b from-[#7f7f7f] to-[#c0c0c0]">
          <Model />
          <div className="absolute right-0 top-1.5 flex text-white">
            <button aria-label="最小化视图"><Icon stroke="#fff"><path d="M4 10h10" strokeWidth={3} /></Icon></button>
            <button aria-label="还原视图"><Icon stroke="#fff"><path d="M7 5V4h7v7h-1M4 6h7v7H4z" strokeWidth={1.800} /></Icon></button>
            <button aria-label="关闭视图"><Icon stroke="#fff"><path d="M5 4l8 9M13 4l-8 9" strokeWidth={2.200} /></Icon></button>
          </div>
        </div>
        <div className="flex w-[18px] shrink-0 flex-col items-center justify-between py-1.5">
          <button aria-label="向上滚动"><Icon w={10} h={8}><path d="M1 6l4-4 4 4" strokeWidth={2} /></Icon></button>
          <span className="h-4 w-3.5 bg-[#cdcdcd]" />
          <button aria-label="向下滚动"><Icon w={10} h={8}><path d="M1 2l4 4 4-4" strokeWidth={2} /></Icon></button>
        </div>
      </div>
      <div className="flex h-[18px] shrink-0 items-center">
        <span className="w-[76px] whitespace-pre pl-6 font-['Liberation_Sans','Noto_Sans_CJK_SC',sans-serif] text-black">1  :  20</span>
        {viewTools.map(([name, art]) => (
          <button key={name} aria-label={name} className="flex w-[21px] justify-center"><Icon>{art}</Icon></button>
        ))}
        <button aria-label="向左滚动" className="flex w-5 justify-center"><Icon w={8} h={10}><path d="M6 1L2 5l4 4" strokeWidth={2} /></Icon></button>
        <div className="flex flex-1 justify-center"><span className="h-4 w-4 bg-[#cdcdcd]" /></div>
        <button aria-label="向右滚动" className="flex w-4 justify-center"><Icon w={8} h={10}><path d="M2 1l4 4-4 4" strokeWidth={2} /></Icon></button>
        <span className="flex w-[18px] justify-center"><Icon w={12} h={12} stroke="none"><path d="M8 0h2v2H8zM4 4h2v2H4zM8 4h2v2H8zM0 8h2v2H0zM4 8h2v2H4zM8 8h2v2H8z" fill="#b5b5b5" /></Icon></span>
      </div>
    </main>
  );
}

/* ---------- project browser ---------- */

type Guide = 'full' | 'none';
type Branch = { label: string; box?: '+' | '-'; guides: Guide[]; rail: string; icon?: React.ReactNode; selected?: boolean };

const RAIL = {
  full: 'inset-y-0',
  top: 'top-0 h-1/2',
  bottom: 'bottom-0 h-1/2',
};

const tree: Branch[] = [
  { label: '视图 (全部)', box: '-', guides: [], rail: RAIL.bottom, selected: true, icon: <Icon w={16} h={16}><path d="M1 4V1h3M12 1h3v3M15 12v3h-3M4 15H1v-3" /><path d="M5 7l1-2h5v4l-1 3H5z" fill="#eee" stroke="#777" /></Icon> },
  { label: '楼层平面', box: '+', guides: ['full'], rail: RAIL.full },
  { label: '天花板平面', box: '+', guides: ['full'], rail: RAIL.full },
  { label: '三维视图', box: '+', guides: ['full'], rail: RAIL.full },
  { label: '立面 (立面 1)', box: '+', guides: ['full'], rail: RAIL.top },
  { label: '图纸 (全部)', guides: [], rail: RAIL.full, icon: <Icon w={16} h={16}><path d="M1 2h11l3 4v8H1z" fill="#fff" /><path d="M3 5h7v4H3zM3 9h4v3H3z" fill="#ccd" strokeWidth={0.800} /><path d="M12 7v5" /></Icon> },
  { label: '族', box: '-', guides: [], rail: RAIL.top, icon: <Icon w={16} h={16}><path d="M1 1h7v7H1z" fill="#dde" /><path d="M11 1h4v13H1v-4h10z" fill="#fff" /></Icon> },
  { label: '填充图案', box: '+', guides: ['none'], rail: RAIL.full },
  { label: '常规模型', box: '-', guides: ['none'], rail: RAIL.full },
  { label: '圆形端头', box: '+', guides: ['none', 'full'], rail: RAIL.full },
  { label: '自适应单个脊瓦', box: '+', guides: ['none', 'full'], rail: RAIL.top },
  { label: '注释符号', box: '+', guides: ['none'], rail: RAIL.top },
];

const Rail = ({ className }: { className: string }) => (
  <span className={`absolute left-2.5 border-l border-dotted border-[#999] ${className}`} />
);

function Browser() {
  return (
    <aside className="flex w-[222px] shrink-0 flex-col gap-[3px]">
      <PaletteTitle>项目浏览器 - 自适应脊瓦</PaletteTitle>
      <ul className="mr-0.5 flex-1 border-l border-t border-[#6e6e6e] bg-white text-black">
        {tree.map(node => (
          <li key={node.label} className="flex h-5 items-center">
            {node.guides.map((guide, i) => (
              <span key={i} className="relative h-5 w-5 shrink-0">{guide === 'full' && <Rail className={RAIL.full} />}</span>
            ))}
            <span className="relative flex h-5 w-5 shrink-0 items-center justify-center">
              <Rail className={node.rail} />
              <span className="absolute left-2.5 right-0 border-t border-dotted border-[#999]" />
              {node.box && (
                <button aria-label="展开或折叠" className="relative size-[9px] border border-[#8f8f8f] bg-[#f4f4f8]">
                  <Icon w={7} h={7} stroke="#34407e"><path d={node.box === '+' ? 'M1 3.500h5M3.500 1v5' : 'M1 3.500h5'} strokeWidth={1} /></Icon>
                </button>
              )}
            </span>
            {node.icon ? (
              <>
                <span className="flex w-5 shrink-0 justify-center">{node.icon}</span>
                <span className={`h-5 px-1 leading-5 ${node.selected ? 'bg-[#e0e0e0]' : ''}`}>{node.label}</span>
              </>
            ) : (
              <>
                <span className="mr-[3px] w-[5px] border-t border-dotted border-[#999]" />
                <span>{node.label}</span>
              </>
            )}
          </li>
        ))}
      </ul>
    </aside>
  );
}

/* ---------- status bar and overlays ---------- */

const filters: [string, React.ReactNode][] = [
  ['选择链接', <><path d="M1 5a3 3 0 0 1 6 0 3 3 0 0 1-6 0M9 5a3 3 0 0 1 6 0 3 3 0 0 1-6 0M5 5h6" stroke="#c99a12" strokeWidth={2} /><Pointer x={8} y={5} s={0.800} /></>],
  ['选择基线图元', <><path d="M8 2L1 9h9M1 13h11" fill={SKY} stroke={BLUE} /><Cross x={9} y={1} s={6} /><Pointer x={10} y={6} s={0.750} /></>],
  ['选择锁定图元', <><path d="M2 2h9M4 2v5h5V2M1 9h11" fill="#f2a057" stroke="#c9551d" strokeWidth={1.700} /><path d="M6 9v7" /><Pointer x={9} y={5} s={0.800} /></>],
  ['按面选择图元', <><path d="M2 4l7-3v12l-7 3z" fill={SKY} stroke={BLUE} /><Pointer x={8} y={5} s={0.800} /></>],
  ['选择时拖拽图元', <><path d="M6 1v11M1 6h11M4 3l2-2 2 2M4 10l2 2 2-2M3 4L1 6l2 2" stroke="#111" /><Cross x={9} y={2} s={6} /><Pointer x={10} y={7} s={0.700} /></>],
  ['后台进程', <circle cx="8" cy="8" r="5" stroke="#999" strokeWidth={3} strokeDasharray="2.500 1.400" />],
];

function StatusBar() {
  return (
    <footer className="flex h-6 shrink-0 items-center justify-between border-t border-[#8c8c8c] bg-[#d6d6d6] pr-[65px] pt-0.5 text-black">
      <p className="whitespace-nowrap pl-0.5">单击可进行选择; 按 Tab 键并单击可选择其他项目; 按 Ctrl 键并单击可将新项目添加到选择集; 按 Shift 键并单击可取消选择。</p>
      <div className="flex items-center">
        {filters.map(([name, art]) => (
          <button key={name} aria-label={name} className="flex w-[26px] justify-center"><Icon>{art}</Icon></button>
        ))}
        <button aria-label="过滤器" className="flex items-center">
          <Icon><path d="M1 2h16l-6 7v7l-4-2V9z" fill="#b5b9c4" stroke="#555" /></Icon>:0
        </button>
      </div>
    </footer>
  );
}

// Red capture frame drawn above the whole window
function CaptureFrame() {
  return (
    <div className="pointer-events-none absolute bottom-4 left-px right-[7px] top-px" aria-hidden="true">
      <div className="absolute inset-[3px] border border-[#e2494b]" />
      <div className="absolute left-0 top-0 size-6 border-l-4 border-t-4 border-[#f00808]" />
      <div className="absolute right-0 top-0 size-6 border-r-4 border-t-4 border-[#f00808]" />
      <div className="absolute bottom-0 left-0 size-6 border-b-4 border-l-4 border-[#f00808]" />
      <div className="absolute bottom-0 right-0 size-6 border-b-4 border-r-4 border-[#f00808]" />
      <div className="absolute -top-px left-1/2 h-1 w-[60px] -translate-x-1/2 bg-[#ee3338]">
        <div className="mx-0.5 border-t-2 border-dotted border-[#f6c9cb]" />
      </div>
    </div>
  );
}

function Watermark() {
  return (
    <div className="pointer-events-none absolute bottom-[52px] right-[84px] flex items-center gap-2 opacity-75" aria-hidden="true">
      <svg width="132" height="86" viewBox="0 0 132 86">
        <path d="M2 54l12-20 6 50H10z" fill="#a9d6bd" opacity="0.500" />
        <path d="M8 34l22-12 8 62H24z" fill="#64b3a0" />
        <path d="M14 52l8-2 6 34h-4z" fill="#58a888" />
        <path d="M78 30c14 0 22 6 26 20 4 12 16 14 18 5l1-6c5-3 9 2 7 8-4 14-22 17-32 7l-6-3-6 23H66z" fill="#6bb5ca" opacity="0.850" />
        <circle cx="87" cy="50" r="2" fill="#cfe6ea" />
        <path d="M78 62l16 2-7 20H73z" fill="#70ae8c" />
        <path d="M92 64l8 5-6 15h-9z" fill="#d3d493" />
        <path d="M23 21L53 5l26 14-9 65h-9V75c0-9-13-9-13 0v9H37z" fill="#3fa6cf" />
        <path d="M53 5l26 14-9 65h-9V60l-4-40z" fill="#4e9fcc" opacity="0.400" />
      </svg>
      <span className="pt-6 font-['DejaVu_Sans_Mono',monospace] text-[38px] font-bold leading-none text-[#4c8fb3]/80">TUITUISOFT</span>
    </div>
  );
}

export default function App() {
  return (
    <div className="relative flex h-screen flex-col overflow-hidden bg-[#f5f5f5] font-['Open_Sans','Noto_Sans_CJK_SC',sans-serif] text-xs">
      <TitleBar />
      <TabStrip />
      <Ribbon />
      <div className="mb-px mt-6 flex min-h-0 flex-1 gap-[5px]">
        <Properties />
        <Viewport />
        <Browser />
      </div>
      <StatusBar />
      <Watermark />
      <CaptureFrame />
    </div>
  );
}
